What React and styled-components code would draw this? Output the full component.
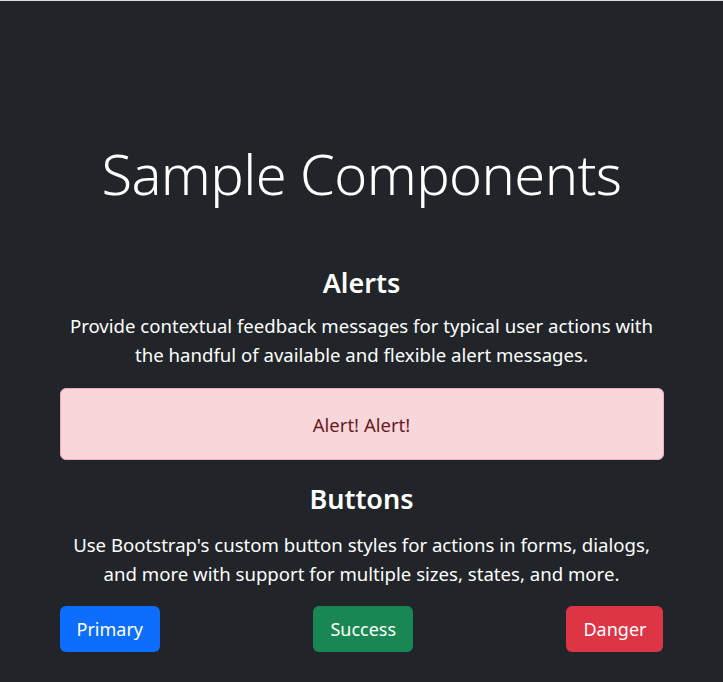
import React from "react";
import styled, { createGlobalStyle } from "styled-components";

const GlobalStyle = createGlobalStyle`
    html, body {
        margin: 0;
        padding: 0;
        background: #212529;
    }
    body {
        font-family: "Noto Sans", "Open Sans", sans-serif;
        color: #fff;
    }
`;

const Page = styled.div`
    min-height: 682px;
    box-sizing: border-box;
    border-top: 1px solid #d9dbdd;
    background: #212529;
    display: flex;
    justify-content: center;
    `;

const Container = styled.main`
    width: 604px;
    padding-top: 137px;
    text-align: center;
    `;

const Title = styled.h1`
    margin: 0 0 58px;
    font-size: 56px;
    font-weight: 300;
    line-height: 70px;
    letter-spacing: -0.6px;
    `;

const Heading = styled.h2`
    margin: 0 0 ${(p) => p.$gap}px;
    font-size: 27px;
    font-weight: 600;
    line-height: 34px;
    `;

const Lead = styled.p`
    margin: 0 0 ${(p) => p.$gap}px;
    font-size: 18.6px;
    line-height: 29px;
    `;

const Alert = styled.div`
    box-sizing: border-box;
    height: 72px;
    margin-bottom: 22px;
    display: flex;
    align-items: center;
    justify-content: center;
    background: #f8d7da;
    border: 1px solid #f1aeb5;
    border-radius: 6px;
    color: #6a1a22;
    font-size: 18.5px;
    font-weight: 400;
    `;

const ButtonRow = styled.div`
    display: flex;
    justify-content: space-between;
    margin-top: 1px;
    `;

const Button = styled.button`
    height: 46px;
    padding: 0 17px;
    border: none;
    border-radius: 6px;
    background: ${(p) => p.$color};
    color: #fff;
    font-family: inherit;
    font-size: 18px;
    cursor: pointer;
    `;

const App = () => {
    return (
        <Page>
            <GlobalStyle />
            <Container>
                <Title>Sample Components</Title>

                <Heading $gap={11}>Alerts</Heading>
                <Lead $gap={19}>
                    Provide contextual feedback messages for typical user actions with
                    the handful of available and flexible alert messages.
                </Lead>
                <Alert>Alert! Alert!</Alert>

                <Heading $gap={14}>Buttons</Heading>
                <Lead $gap={18}>
                    Use Bootstrap's custom button styles for actions in forms, dialogs,
                    and more with support for multiple sizes, states, and more.
                </Lead>
                <ButtonRow>
                    <Button $color="#0d6efd">Primary</Button>
                    <Button $color="#198754">Success</Button>
                    <Button $color="#dc3545">Danger</Button>
                </ButtonRow>
            </Container>
        </Page>
    );
};

export default App;
